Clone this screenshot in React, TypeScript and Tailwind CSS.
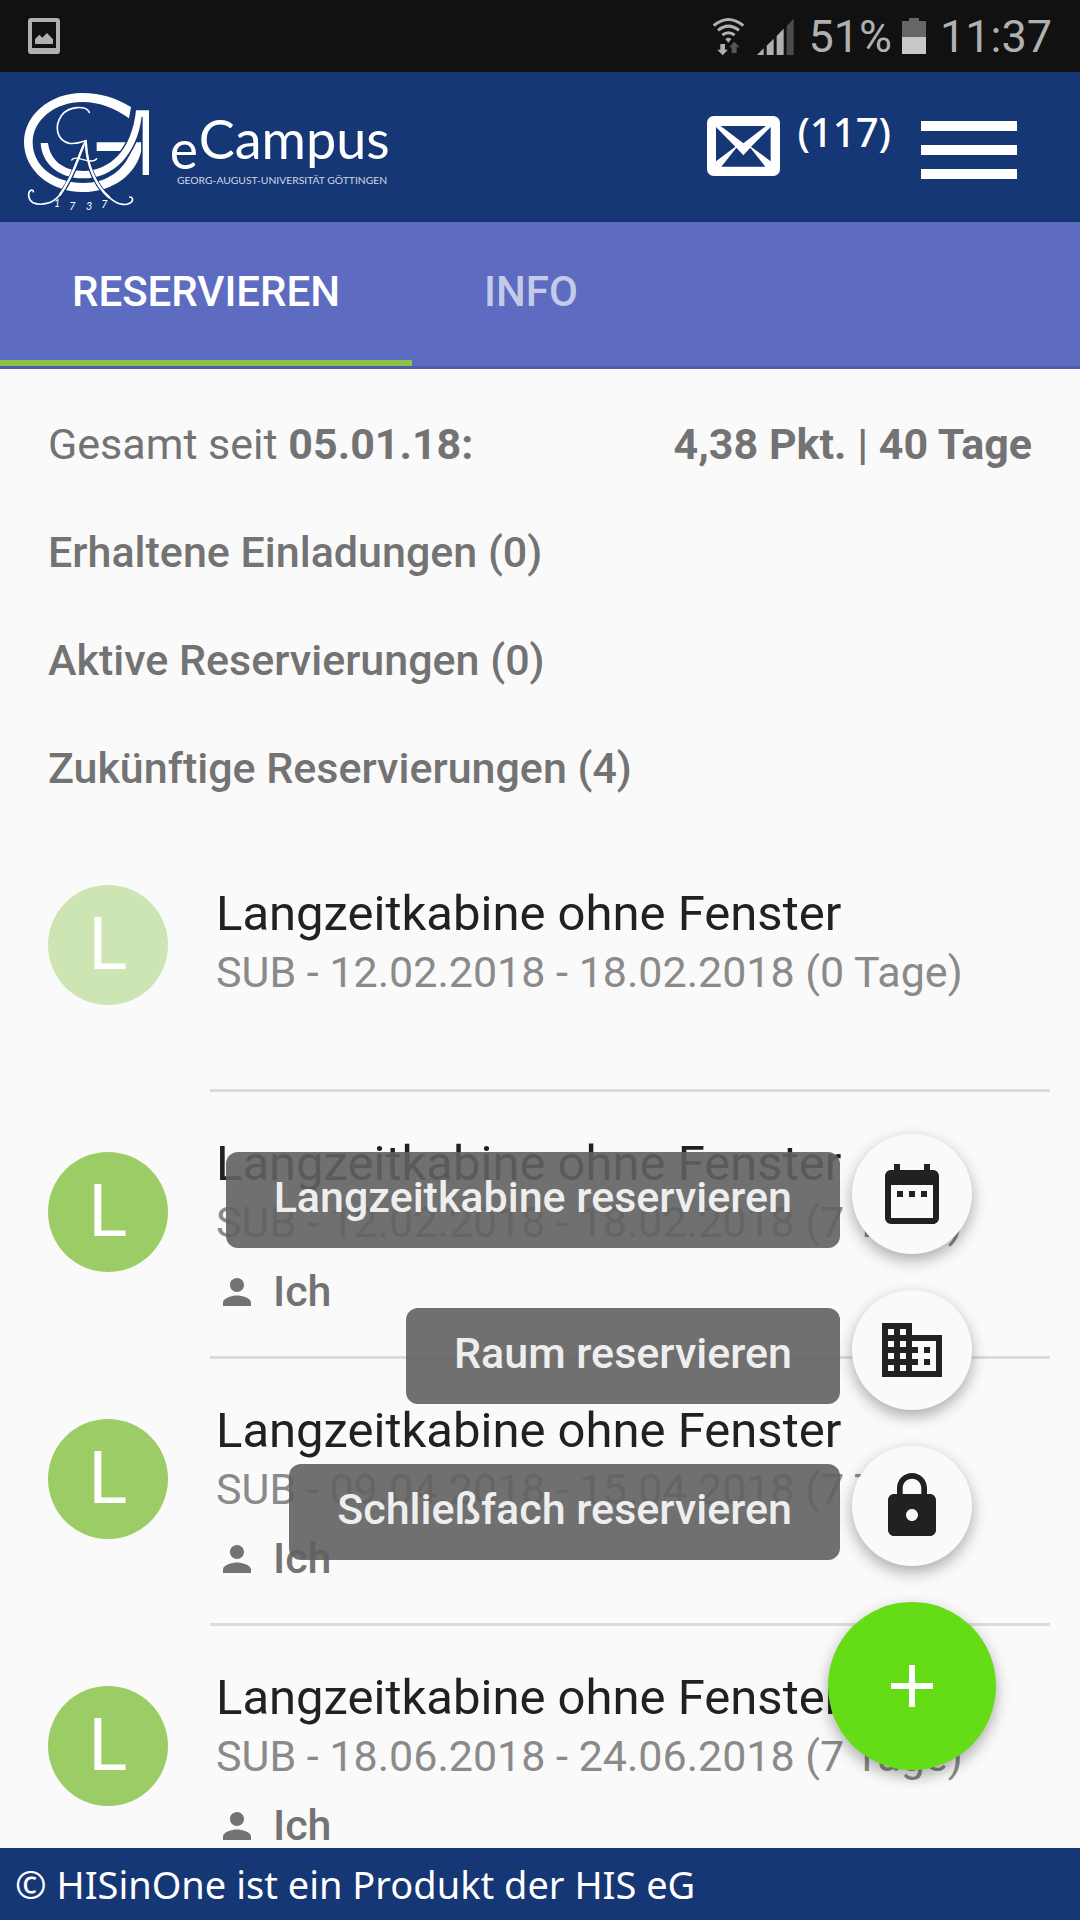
import { useState } from "react";
import { MdAdd, MdBusiness, MdDateRange, MdLock, MdPerson } from "react-icons/md";

const tabs = [
  { id: "reserve", label: "RESERVIEREN" },
  { id: "info", label: "INFO" },
];

const sections = [
  "Erhaltene Einladungen (0)",
  "Aktive Reservierungen (0)",
  "Zukünftige Reservierungen (4)",
];

const reservations = [
  {
    id: 1,
    title: "Langzeitkabine ohne Fenster",
    details: "SUB - 12.02.2018 - 18.02.2018 (0 Tage)",
    owner: null,
  },
  {
    id: 2,
    title: "Langzeitkabine ohne Fenster",
    details: "SUB - 12.02.2018 - 18.02.2018 (7 Tage)",
    owner: "Ich",
  },
  {
    id: 3,
    title: "Langzeitkabine ohne Fenster",
    details: "SUB - 09.04.2018 - 15.04.2018 (7 Tage)",
    owner: "Ich",
  },
  {
    id: 4,
    title: "Langzeitkabine ohne Fenster",
    details: "SUB - 18.06.2018 - 24.06.2018 (7 Tage)",
    owner: "Ich",
  },
];

const actions = [
  { id: "cabin", label: "Langzeitkabine reservieren", icon: MdDateRange },
  { id: "room", label: "Raum reservieren", icon: MdBusiness },
  { id: "locker", label: "Schließfach reservieren", icon: MdLock },
];

function StatusBar() {
  return (
    <div className="flex h-[72px] shrink-0 items-center bg-[#111111] px-7 text-[45px] leading-[72px] text-[#b0b0b0]">
      <svg viewBox="81 51 96 108" className="h-9 w-8" fill="#b0b0b0">
        <path
          fillRule="evenodd"
          d="M91 51H167Q177 51 177 61V149Q177 159 167 159H91Q81 159 81 149V61Q81 51 91 51ZM93 63V141H165V63Z"
        />
        <path d="M102 129V115L115 101L124 110L138 96L156 115V129Z" />
      </svg>
      <div className="ml-auto flex items-center">
        {/* Wi-Fi with transfer arrows */}
        <svg viewBox="102 45 99 117" className="h-[39px] w-[33px]" fill="none">
          <g stroke="#b0b0b0" strokeWidth="9">
            <path d="M107 71Q151 34 196 71" />
            <path d="M120 85Q151 60 183 85" />
            <path d="M133 99Q151 85 170 99" />
          </g>
          <path d="M142 111Q151 104 160 111L151 122Z" fill="#b0b0b0" />
          <path d="M127 126H141V143H150L134 160L118 143H127Z" fill="#b0b0b0" />
          <path d="M161 153H176V136H185L169 119L153 136H161Z" fill="#555555" />
        </svg>
        <svg viewBox="235 45 111 117" className="ml-3 h-[39px] w-[37px]">
          <g fill="#b0b0b0">
            <path d="M235 159L255 139V159Z" />
            <path d="M264 159V131L285 110V159Z" />
            <path d="M294 159V102L315 80V159Z" />
          </g>
          <path d="M324 159V72L345 50V159Z" fill="#4c4c4c" />
        </svg>
        <span className="ml-[14px] pt-[2px]">51%</span>
        <svg viewBox="666 51 72 108" className="ml-[10px] h-9 w-6">
          <path d="M666 60H687V51H717V60H738V159H666Z" fill="#666666" />
          <path d="M666 108H738V159H666Z" fill="#c8c8c8" />
        </svg>
        <span className="ml-[14px] pt-[2px]">11:37</span>
      </div>
    </div>
  );
}

function Logo() {
  return (
    <svg
      viewBox="0 6 1200 450"
      className="h-[150px] w-[400px]"
      role="img"
      aria-label="eCampus Georg-August-Universität Göttingen"
      fill="#ffffff"
    >
      {/* G */}
      <path d="M393 111L387 145C345 115 300 96 247 96C165 96 98 150 98 217C98 290 165 339 250 339C322 339 372 300 394 243H290V217H425V236C411 312 340 366 247 366C150 366 72 300 72 217C72 135 150 69 247 69C305 69 350 85 393 111Z" />
      {/* U running into the A */}
      <path
        d="M122 219H144C150 270 190 303 250 303C330 303 396 240 408 121H447V315H428V140H425C410 255 340 325 250 325C175 325 125 280 122 219Z"
        stroke="#163775"
        strokeWidth="9"
        paintOrder="stroke"
      />
      {/* Flourished initials */}
      <g fill="none" strokeLinecap="round">
        <g stroke="#163775" strokeWidth="13">
          <path d="M250 230C233 270 219 322 185 368" />
          <path d="M258 230C260 280 283 340 320 376" />
        </g>
        <g stroke="#ffffff">
          <path
            d="M268 127C259 107 208 106 185 136C160 172 172 212 208 220C228 223 246 216 258 212"
            strokeWidth="5"
          />
          <path
            d="M256 214C232 262 219 322 180 374C158 402 122 408 99 398C84 389 82 367 93 361C97 359 100 362 100 365"
            strokeWidth="5"
          />
          <path d="M250 228C232 270 219 322 180 374" strokeWidth="7" />
          <path
            d="M258 212C258 280 285 346 331 385C355 406 385 409 396 394C400 387 397 381 389 381"
            strokeWidth="5"
          />
          <path d="M258 222C260 280 285 346 326 381" strokeWidth="7" />
          <path
            d="M290 266C282 278 262 272 246 268C232 263 220 263 215 270"
            strokeWidth="4"
          />
        </g>
      </g>
      <g fontFamily="Lato, sans-serif" fontStyle="italic" fontSize="32">
        <text x="162" y="410">1</text>
        <text x="208" y="419">7</text>
        <text x="258" y="419">3</text>
        <text x="304" y="414">7</text>
      </g>
      <g fontFamily="Lato, sans-serif">
        <text x="509" y="298" fontSize="160">e</text>
        <text x="596" y="267" fontSize="162">Campus</text>
        <text x="531" y="342" fontSize="31" fill="#d0d7e3">
          GEORG-AUGUST-UNIVERSITÄT GÖTTINGEN
        </text>
      </g>
    </svg>
  );
}

function Header() {
  return (
    <header className="flex h-[150px] shrink-0 items-start bg-[#163775] pr-[63px] font-['Noto_Sans',sans-serif] text-white">
      <Logo />
      <a href="#nachrichten" className="mt-11 ml-auto flex items-start gap-[17px]">
        <svg viewBox="81 348 219 180" className="h-[60px] w-[73px]" aria-hidden="true">
          <rect x="81" y="348" width="219" height="180" rx="20" fill="#ffffff" />
          <g fill="#163775">
            <path d="M122 378H258L190 430Z" />
            <path d="M108 381L166 440L108 484Z" />
            <path d="M272 381L213 440L272 484Z" />
            <path d="M124 500L169 443L190 466L211 443L256 500Z" />
          </g>
        </svg>
        <span className="-mt-3 text-[40px] leading-[56px] font-medium">(117)</span>
      </a>
      <button
        type="button"
        aria-label="Menü"
        className="mt-[49px] ml-[30px] flex w-24 flex-col gap-[14px]"
      >
        <span className="h-[10px] bg-white" />
        <span className="h-[10px] bg-white" />
        <span className="h-[10px] bg-white" />
      </button>
    </header>
  );
}

export default function App() {
  const [activeTab, setActiveTab] = useState("reserve");
  const [dialOpen, setDialOpen] = useState(true);

  return (
    <div className="flex h-screen flex-col overflow-hidden bg-[#fafafa] font-[Roboto,sans-serif]">
      <StatusBar />
      <Header />

      <nav className="flex shrink-0 border-b-[3px] border-[#515ca9] bg-[#5d6bc0]">
        {tabs.map((tab) => (
          <button
            key={tab.id}
            type="button"
            onClick={() => setActiveTab(tab.id)}
            className={`h-[144px] border-b-[6px] px-[72px] text-[42px] font-medium ${
              activeTab === tab.id
                ? "border-[#8bc34a] text-white"
                : "border-transparent text-[#c5cae9]"
            }`}
          >
            {tab.label}
          </button>
        ))}
      </nav>

      <div className="relative min-h-0 flex-1">
        <main className="h-full overflow-hidden pt-[21px]">
          <div className="px-12 text-[43px] leading-[108px] font-medium text-[#737373]">
            <p className="flex justify-between">
              <span className="font-normal">
                Gesamt seit <b className="font-bold">05.01.18:</b>
              </span>
              <b className="font-bold">4,38 Pkt. | 40 Tage</b>
            </p>
            {sections.map((section) => (
              <h2 key={section}>{section}</h2>
            ))}
          </div>

          <ul className="mt-[3px]">
            {reservations.map((item) => (
              <li key={item.id} className="flex h-[267px] pr-[30px] pl-12">
                <div
                  className={`mt-[60px] flex size-[120px] shrink-0 items-center justify-center rounded-full text-[72px] text-white ${
                    item.owner ? "bg-[#9ccc65]" : "bg-[#cde5b2]"
                  }`}
                >
                  L
                </div>
                <div className="ml-[42px] flex min-w-0 flex-1 flex-col justify-center border-b-[3px] border-[#dcdcdc] pl-[6px]">
                  <h3 className="text-[49px] leading-[60px] whitespace-nowrap text-[#212121]">
                    {item.title}
                  </h3>
                  <p className="pb-[2px] text-[43px] leading-[56px] whitespace-nowrap text-[#8a8a8a]">
                    {item.details}
                  </p>
                  {item.owner ? (
                    <p className="mt-[15px] flex items-center gap-[15px] text-[43px] leading-[48px] font-medium text-[#737373]">
                      <MdPerson className="mt-[2px] size-[42px]" />
                      {item.owner}
                    </p>
                  ) : (
                    <div className="h-[29px]" />
                  )}
                </div>
              </li>
            ))}
          </ul>
        </main>

        {/* Speed dial */}
        <div className="absolute right-[84px] bottom-[78px] flex flex-col items-end gap-9">
          {dialOpen &&
            actions.map(({ id, label, icon: Icon }) => (
              <button
                key={id}
                type="button"
                className="flex items-center gap-3 pr-6 text-[43px] font-medium"
              >
                <span className="mt-3 rounded-[12px] bg-[#616161]/90 px-12 pb-[6px] leading-[90px] text-[#eeeeee]">
                  {label}
                </span>
                <span className="flex size-[120px] items-center justify-center rounded-full bg-[#fafafa] text-[#212121] shadow-[0_6px_15px_rgba(0,0,0,0.32)]">
                  <Icon className="size-[72px]" />
                </span>
              </button>
            ))}
          <button
            type="button"
            aria-label="Reservieren"
            onClick={() => setDialOpen(!dialOpen)}
            className="flex size-[168px] items-center justify-center rounded-full bg-[#64dd17] text-white shadow-[0_6px_15px_rgba(0,0,0,0.32)]"
          >
            <MdAdd className="size-[72px]" />
          </button>
        </div>
      </div>

      <footer className="h-[72px] shrink-0 bg-[#163775] px-[15px] font-['Noto_Sans',sans-serif] text-[38px] leading-[72px] text-white">
        © HISinOne ist ein Produkt der HIS eG
      </footer>
    </div>
  );
}
